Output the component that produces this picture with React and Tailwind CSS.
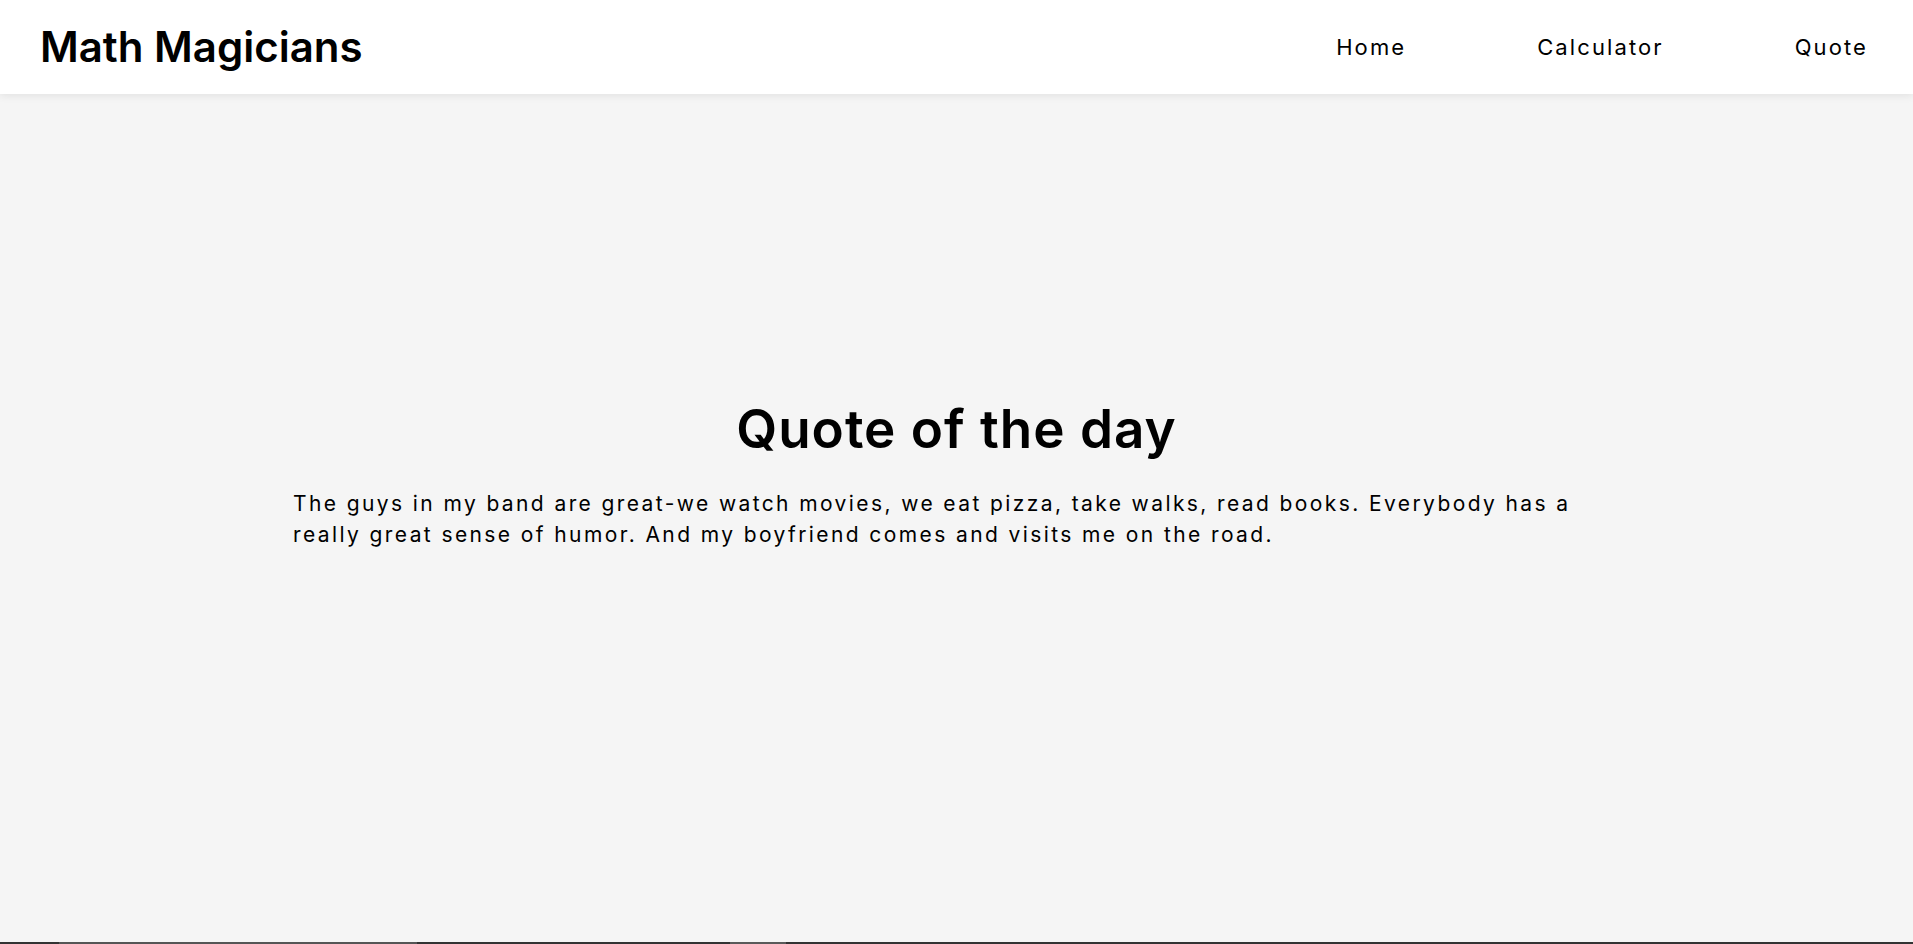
import React from 'react';

const links = ['Home', 'Calculator', 'Quote'];

const App = () => {
  return (
    <div className="min-h-screen flex flex-col bg-[#f5f5f5] font-['Inter',sans-serif] text-black">
      <header className="relative z-10 h-[94px] shrink-0 bg-white shadow-[0_2px_8px_rgba(0,0,0,0.08)] flex items-center justify-between pl-10 pr-[45px]">
        <h1 className="text-[42px] font-semibold leading-none">Math Magicians</h1>
        <nav>
          <ul className="flex items-center gap-[131px]">
            {links.map((link) => (
              <li key={link} className="text-[22px] tracking-[2.1px] leading-none">
                <a href="#">{link}</a>
              </li>
            ))}
          </ul>
        </nav>
      </header>

      <main className="flex-1 flex flex-col items-center pt-[302px]">
        <div className="w-[1327px] flex flex-col items-center">
          <h2 className="text-[53px] font-semibold tracking-[1px] leading-tight">Quote of the day</h2>
          <p className="mt-[26px] self-stretch text-[21px] leading-[31px] tracking-[2.4px]">
            The guys in my band are great-we watch movies, we eat pizza, take walks, read books. Everybody has a
            really great sense of humor. And my boyfriend comes and visits me on the road.
          </p>
        </div>
      </main>

      <div className="h-[2px] shrink-0 bg-[#333] flex">
        <div className="ml-[59px] w-[358px] bg-[#555]" />
        <div className="ml-[313px] w-[56px] bg-[#5a5a5a]" />
      </div>
    </div>
  );
};

export default App;
